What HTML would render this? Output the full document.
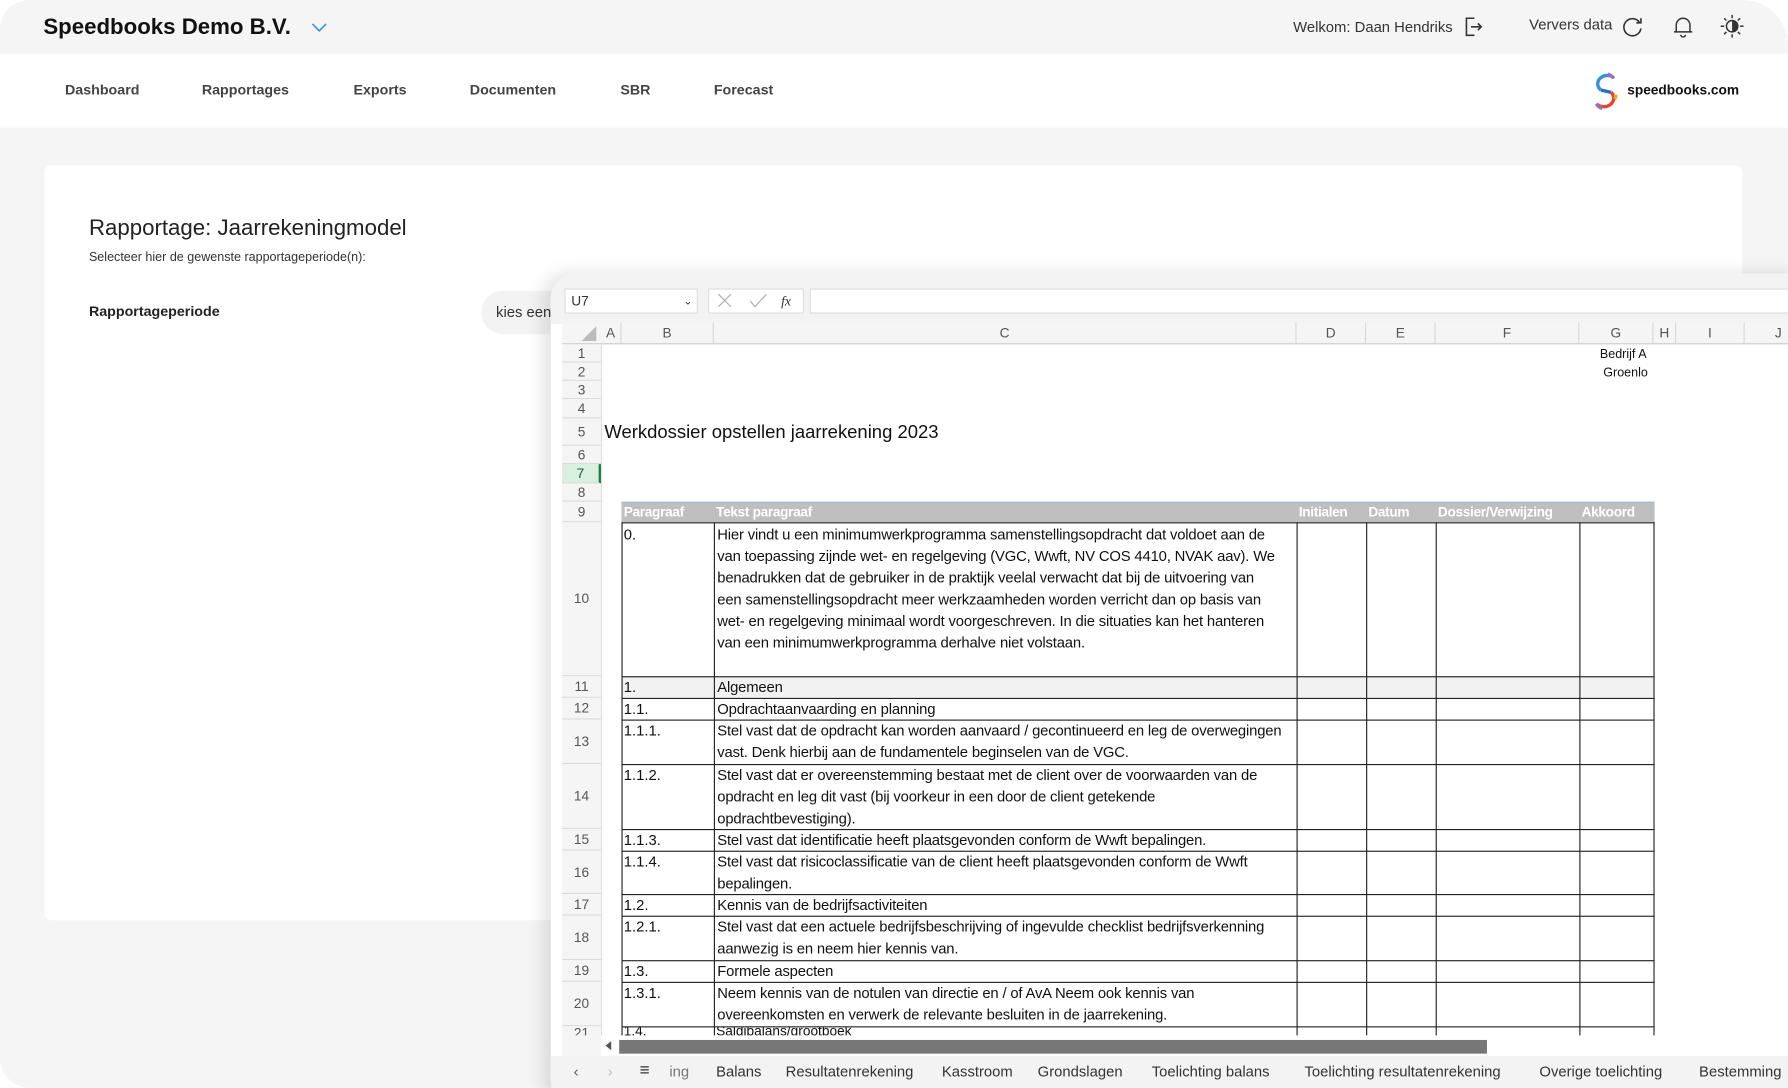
<!DOCTYPE html>
<html><head><meta charset="utf-8">
<style>
html,body{margin:0;padding:0;width:1788px;height:1088px;overflow:hidden;background:#fff;}
#w{position:absolute;left:0;top:0;width:1568px;height:954px;transform:scale(1.14031);transform-origin:0 0;font-family:"Liberation Sans",sans-serif;}
.a{position:absolute;}
.app{position:absolute;left:0;top:0;width:1568px;height:954px;background:#f5f5f5;border-radius:26px 40px 0 26px;overflow:hidden;}
.nav{position:absolute;left:0;top:47px;width:1568px;height:65px;background:#fff;}
.nav span{position:absolute;top:25px;font-size:12.5px;font-weight:bold;color:#444;}
.card{position:absolute;left:39px;top:145px;width:1489px;height:662px;background:#fff;border-radius:6px;}
.xl{position:absolute;left:483px;top:240px;width:1100px;height:730px;background:#fff;border-radius:22px 0 0 22px;box-shadow:-6px 0 16px rgba(0,0,0,.12);overflow:hidden;}
.rh{position:absolute;left:10px;width:34px;text-align:center;font-size:12px;color:#555;border-bottom:1px solid #dcdcdc;box-sizing:border-box;background:#f5f5f5;}
.ch{position:absolute;top:43px;height:18px;font-size:12px;color:#555;text-align:center;line-height:18px;border-right:1px solid #d8d8d8;box-sizing:border-box;}
.t{position:absolute;font-size:13px;line-height:19px;color:#111;white-space:nowrap;}
.b{letter-spacing:-.15px;}
.hl{position:absolute;left:62px;width:906px;height:0;border-top:1.5px solid #222;}
.vl{position:absolute;top:218px;height:452px;width:0;border-left:1.3px solid #222;}
.tab{position:absolute;top:692px;font-size:13px;color:#333;white-space:nowrap;}
</style></head><body><div id="w">
<div class="app">
  <div class="a" style="left:38px;top:13px;font-size:19.5px;font-weight:bold;color:#111;">Speedbooks Demo B.V.</div>
  <svg class="a" style="left:272px;top:18px" width="16" height="12" viewBox="0 0 16 12"><path d="M2 3 L8 9 L14 3" fill="none" stroke="#3a9bd8" stroke-width="1.5"/></svg>
  <div class="a" style="left:1134px;top:16px;font-size:13px;color:#333;">Welkom: Daan Hendriks</div>
  <svg class="a" style="left:1282px;top:13px" width="20" height="20" viewBox="0 0 20 20"><path d="M11 3 H4 V18 H11 M8 10.5 H17 M14 7.5 L17 10.5 L14 13.5" fill="none" stroke="#333" stroke-width="1.4"/></svg>
  <div class="a" style="left:1341px;top:14px;font-size:13px;color:#333;">Ververs data</div>
  <svg class="a" style="left:1421px;top:12px" width="22" height="22" viewBox="0 0 22 22"><path d="M17 8 A7.5 7.5 0 1 0 18 13" fill="none" stroke="#333" stroke-width="1.4"/><path d="M14 8 H18 V4" fill="none" stroke="#333" stroke-width="1.4"/></svg>
  <svg class="a" style="left:1465px;top:12px" width="22" height="22" viewBox="0 0 22 22"><path d="M5 16 V10 A6 6 0 0 1 17 10 V16 Z M3 16 H19 M9 18.5 A2 2 0 0 0 13 18.5" fill="none" stroke="#333" stroke-width="1.3"/></svg>
  <svg class="a" style="left:1507px;top:11px" width="24" height="24" viewBox="0 0 24 24"><circle cx="12" cy="12" r="5" fill="none" stroke="#333" stroke-width="1.3"/><path d="M12 7 A5 5 0 0 1 12 17 Z" fill="#333"/><path d="M12 2V5M12 19V22M2 12H5M19 12H22M5 5L7 7M17 17L19 19M5 19L7 17M17 7L19 5" stroke="#333" stroke-width="1.3"/></svg>
  <div class="nav">
    <span style="left:57px">Dashboard</span><span style="left:177px">Rapportages</span><span style="left:310px">Exports</span><span style="left:412px">Documenten</span><span style="left:544px">SBR</span><span style="left:626px">Forecast</span>
    <svg class="a" style="left:1396px;top:15px" width="26" height="36" viewBox="0 0 26 36"><path d="M19 6 A8 7 0 1 0 8 17" fill="none" stroke="#3a8fd8" stroke-width="3"/><path d="M8 17 L17 19" stroke="#2a6fc0" stroke-width="3"/><path d="M17 19 A8 7 0 1 1 4 29" fill="none" stroke="#e8452e" stroke-width="3"/><path d="M4 29 A8 7 0 0 0 9 33" fill="none" stroke="#9b6fc0" stroke-width="3"/><path d="M14 3 A8 7 0 0 1 19 7" fill="none" stroke="#9b6fc0" stroke-width="3"/><path d="M20 25 A8 7 0 0 0 21 21" fill="none" stroke="#f5a623" stroke-width="3"/></svg>
    <span style="left:1427px;top:25px;font-size:12px;color:#111;">speedbooks.com</span>
  </div>
  <div class="card">
    <div class="a" style="left:39px;top:44px;font-size:19.5px;color:#222;">Rapportage: Jaarrekeningmodel</div>
    <div class="a" style="left:39px;top:75px;font-size:11px;color:#333;">Selecteer hier de gewenste rapportageperiode(n):</div>
    <div class="a" style="left:39px;top:121px;font-size:12.5px;font-weight:bold;color:#222;">Rapportageperiode</div>
    <div class="a" style="left:383px;top:110px;width:120px;height:38px;background:#f3f3f3;border-radius:19px;"></div>
    <div class="a" style="left:396px;top:121px;font-size:13px;color:#333;">kies een</div>
  </div>
  <div class="xl">
    <div class="a" style="left:0;top:0;width:1100px;height:44px;background:#f3f3f3;"></div>
    <div class="a" style="left:12px;top:13px;width:117px;height:22px;background:#fff;border:1px solid #ddd;box-sizing:border-box;font-size:12px;line-height:20px;padding-left:5px;color:#333;">U7<span style="position:absolute;right:4px;font-size:9px;">&#8964;</span></div>
    <div class="a" style="left:138px;top:13px;width:84px;height:22px;background:#fff;border:1px solid #ddd;box-sizing:border-box;"></div>
    <svg class="a" style="left:145px;top:17px" width="70" height="14"><path d="M2 1L13 12M13 1L2 12" stroke="#aaa" stroke-width="1"/><path d="M30 7L34 12L44 1" fill="none" stroke="#aaa" stroke-width="1"/><text x="57" y="11" font-size="12" font-style="italic" font-family="Liberation Serif" fill="#333">fx</text></svg>
    <div class="a" style="left:227px;top:13px;width:900px;height:22px;background:#fff;border:1px solid #ddd;box-sizing:border-box;"></div>
    <div class="a" style="left:10px;top:43px;width:1090px;height:18px;background:#f5f5f5;border-bottom:1.5px solid #ccc;"></div>
    <svg class="a" style="left:27px;top:46px" width="13" height="13"><path d="M13 0V13H0Z" fill="#bbb"/></svg>
    <div class="ch" style="left:44px;width:18px">A</div><div class="ch" style="left:62px;width:81px">B</div><div class="ch" style="left:143px;width:511px">C</div><div class="ch" style="left:654px;width:61px">D</div><div class="ch" style="left:715px;width:61px">E</div><div class="ch" style="left:776px;width:126px">F</div><div class="ch" style="left:902px;width:65px">G</div><div class="ch" style="left:967px;width:20px">H</div><div class="ch" style="left:987px;width:60px">I</div><div class="ch" style="left:1047px;width:60px">J</div>
    <div class="a" style="left:10px;top:62px;width:34px;height:610px;background:#f5f5f5;border-right:1px solid #ddd;"></div>
    <div class="rh" style="top:62px;height:16px;line-height:16px">1</div>
    <div class="rh" style="top:78px;height:16px;line-height:16px">2</div>
    <div class="rh" style="top:94px;height:16px;line-height:16px">3</div>
    <div class="rh" style="top:110px;height:17px;line-height:17px">4</div>
    <div class="rh" style="top:127px;height:24px;line-height:24px">5</div>
    <div class="rh" style="top:151px;height:16px;line-height:16px">6</div>
    <div class="rh" style="top:167px;height:17px;line-height:17px;background:#d9efdf;border-right:2px solid #1e7b45;color:#1e5c33">7</div>
    <div class="rh" style="top:184px;height:16px;line-height:16px">8</div>
    <div class="rh" style="top:200px;height:18px;line-height:18px">9</div>
    <div class="rh" style="top:218px;height:135px;line-height:135px">10</div>
    <div class="rh" style="top:353px;height:19px;line-height:19px">11</div>
    <div class="rh" style="top:372px;height:19px;line-height:19px">12</div>
    <div class="rh" style="top:391px;height:39px;line-height:39px">13</div>
    <div class="rh" style="top:430px;height:57px;line-height:57px">14</div>
    <div class="rh" style="top:487px;height:19px;line-height:19px">15</div>
    <div class="rh" style="top:506px;height:38px;line-height:38px">16</div>
    <div class="rh" style="top:544px;height:19px;line-height:19px">17</div>
    <div class="rh" style="top:563px;height:39px;line-height:39px">18</div>
    <div class="rh" style="top:602px;height:19px;line-height:19px">19</div>
    <div class="rh" style="top:621px;height:39px;line-height:39px">20</div>
    <div class="rh" style="top:660px;height:12px;line-height:12px;overflow:hidden">21</div>
    <div class="t" style="left:920px;top:63px;font-size:11px;line-height:16px">Bedrijf A</div>
    <div class="t" style="left:923px;top:79px;font-size:11px;line-height:16px">Groenlo</div>
    <div class="t" style="left:47px;top:129px;font-size:16.2px;line-height:20px;">Werkdossier opstellen jaarrekening 2023</div>
    <div class="a" style="left:62px;top:200px;width:906px;height:18px;background:#bfbfbf;border-top:1px solid #9db8d8;box-sizing:border-box;"></div>
    <div class="a" style="left:62px;top:353px;width:906px;height:19px;background:#f2f2f2;"></div>
    <div class="t" style="left:64px;top:200px;color:#fff;font-weight:bold;font-size:12px;letter-spacing:-.3px">Paragraaf</div>
    <div class="t" style="left:145px;top:200px;color:#fff;font-weight:bold;font-size:12px;letter-spacing:-.3px">Tekst paragraaf</div>
    <div class="t" style="left:656px;top:200px;color:#fff;font-weight:bold;font-size:12px;letter-spacing:-.3px">Initialen</div>
    <div class="t" style="left:717px;top:200px;color:#fff;font-weight:bold;font-size:12px;letter-spacing:-.3px">Datum</div>
    <div class="t" style="left:778px;top:200px;color:#fff;font-weight:bold;font-size:12px;letter-spacing:-.3px">Dossier/Verwijzing</div>
    <div class="t" style="left:904px;top:200px;color:#fff;font-weight:bold;font-size:12px;letter-spacing:-.3px">Akkoord</div>
    <div class="hl" style="top:218px"></div><div class="hl" style="top:353px"></div><div class="hl" style="top:372px"></div><div class="hl" style="top:391px"></div><div class="hl" style="top:430px"></div><div class="hl" style="top:487px"></div><div class="hl" style="top:506px"></div><div class="hl" style="top:544px"></div><div class="hl" style="top:563px"></div><div class="hl" style="top:602px"></div><div class="hl" style="top:621px"></div><div class="hl" style="top:660px"></div>
    <div class="vl" style="left:62px"></div><div class="vl" style="left:143px"></div><div class="vl" style="left:654px"></div><div class="vl" style="left:715px"></div><div class="vl" style="left:776px"></div><div class="vl" style="left:902px"></div><div class="vl" style="left:967px"></div>
    <div class="t" style="left:64px;top:219px">0.</div>
    <div class="t b" style="left:146px;top:219px">Hier vindt u een minimumwerkprogramma samenstellingsopdracht dat voldoet aan de<br>van toepassing zijnde wet- en regelgeving (VGC, Wwft, NV COS 4410, NVAK aav). We<br>benadrukken dat de gebruiker in de praktijk veelal verwacht dat bij de uitvoering van<br>een samenstellingsopdracht meer werkzaamheden worden verricht dan op basis van<br>wet- en regelgeving minimaal wordt voorgeschreven. In die situaties kan het hanteren<br>van een minimumwerkprogramma derhalve niet volstaan.</div>
    <div class="t" style="left:64px;top:353px">1.</div><div class="t b" style="left:146px;top:353px">Algemeen</div>
    <div class="t" style="left:64px;top:372px">1.1.</div><div class="t b" style="left:146px;top:372px">Opdrachtaanvaarding en planning</div>
    <div class="t" style="left:64px;top:391px">1.1.1.</div><div class="t b" style="left:146px;top:391px">Stel vast dat de opdracht kan worden aanvaard / gecontinueerd en leg de overwegingen<br>vast. Denk hierbij aan de fundamentele beginselen van de VGC.</div>
    <div class="t" style="left:64px;top:430px">1.1.2.</div><div class="t b" style="left:146px;top:430px">Stel vast dat er overeenstemming bestaat met de client over de voorwaarden van de<br>opdracht en leg dit vast (bij voorkeur in een door de client getekende<br>opdrachtbevestiging).</div>
    <div class="t" style="left:64px;top:487px">1.1.3.</div><div class="t b" style="left:146px;top:487px">Stel vast dat identificatie heeft plaatsgevonden conform de Wwft bepalingen.</div>
    <div class="t" style="left:64px;top:506px">1.1.4.</div><div class="t b" style="left:146px;top:506px">Stel vast dat risicoclassificatie van de client heeft plaatsgevonden conform de Wwft<br>bepalingen.</div>
    <div class="t" style="left:64px;top:544px">1.2.</div><div class="t b" style="left:146px;top:544px">Kennis van de bedrijfsactiviteiten</div>
    <div class="t" style="left:64px;top:563px">1.2.1.</div><div class="t b" style="left:146px;top:563px">Stel vast dat een actuele bedrijfsbeschrijving of ingevulde checklist bedrijfsverkenning<br>aanwezig is en neem hier kennis van.</div>
    <div class="t" style="left:64px;top:602px">1.3.</div><div class="t b" style="left:146px;top:602px">Formele aspecten</div>
    <div class="t" style="left:64px;top:621px">1.3.1.</div><div class="t b" style="left:146px;top:621px">Neem kennis van de notulen van directie en / of AvA Neem ook kennis van<br>overeenkomsten en verwerk de relevante besluiten in de jaarrekening.</div>
    <div class="a" style="left:0;top:668px;width:1100px;height:90px;background:#fff;"></div>
    <div class="a" style="left:44px;top:661px;width:1056px;height:7px;overflow:hidden;"><div class="t" style="left:20px;top:-6px;font-size:12px">1.4.</div><div class="t" style="left:101px;top:-6px;font-size:12px">Saldibalans/grootboek</div></div>
    <div class="a" style="left:10px;top:668px;width:34px;height:18px;background:#f5f5f5;"></div>
    <svg class="a" style="left:48px;top:673px" width="6" height="8"><path d="M5 0V8L0 4Z" fill="#555"/></svg>
    <div class="a" style="left:60px;top:672px;width:761px;height:12px;background:#777;"></div>
    <div class="a" style="left:0;top:686px;width:1100px;height:44px;background:#f3f3f3;"></div>
    <div class="tab" style="left:20px;color:#555">&#8249;</div>
    <div class="tab" style="left:50px;color:#bbb">&#8250;</div>
    <div class="tab" style="left:78px;font-size:15px;top:690px">&#8801;</div>
    <div class="tab" style="left:104px;color:#777">ing</div>
    <div class="tab" style="left:145px">Balans</div>
    <div class="tab" style="left:206px">Resultatenrekening</div>
    <div class="tab" style="left:343px">Kasstroom</div>
    <div class="tab" style="left:427px">Grondslagen</div>
    <div class="tab" style="left:527px">Toelichting balans</div>
    <div class="tab" style="left:661px">Toelichting resultatenrekening</div>
    <div class="tab" style="left:867px">Overige toelichting</div>
    <div class="tab" style="left:1007px">Bestemming</div>
  </div>
</div>
</div></body></html>
